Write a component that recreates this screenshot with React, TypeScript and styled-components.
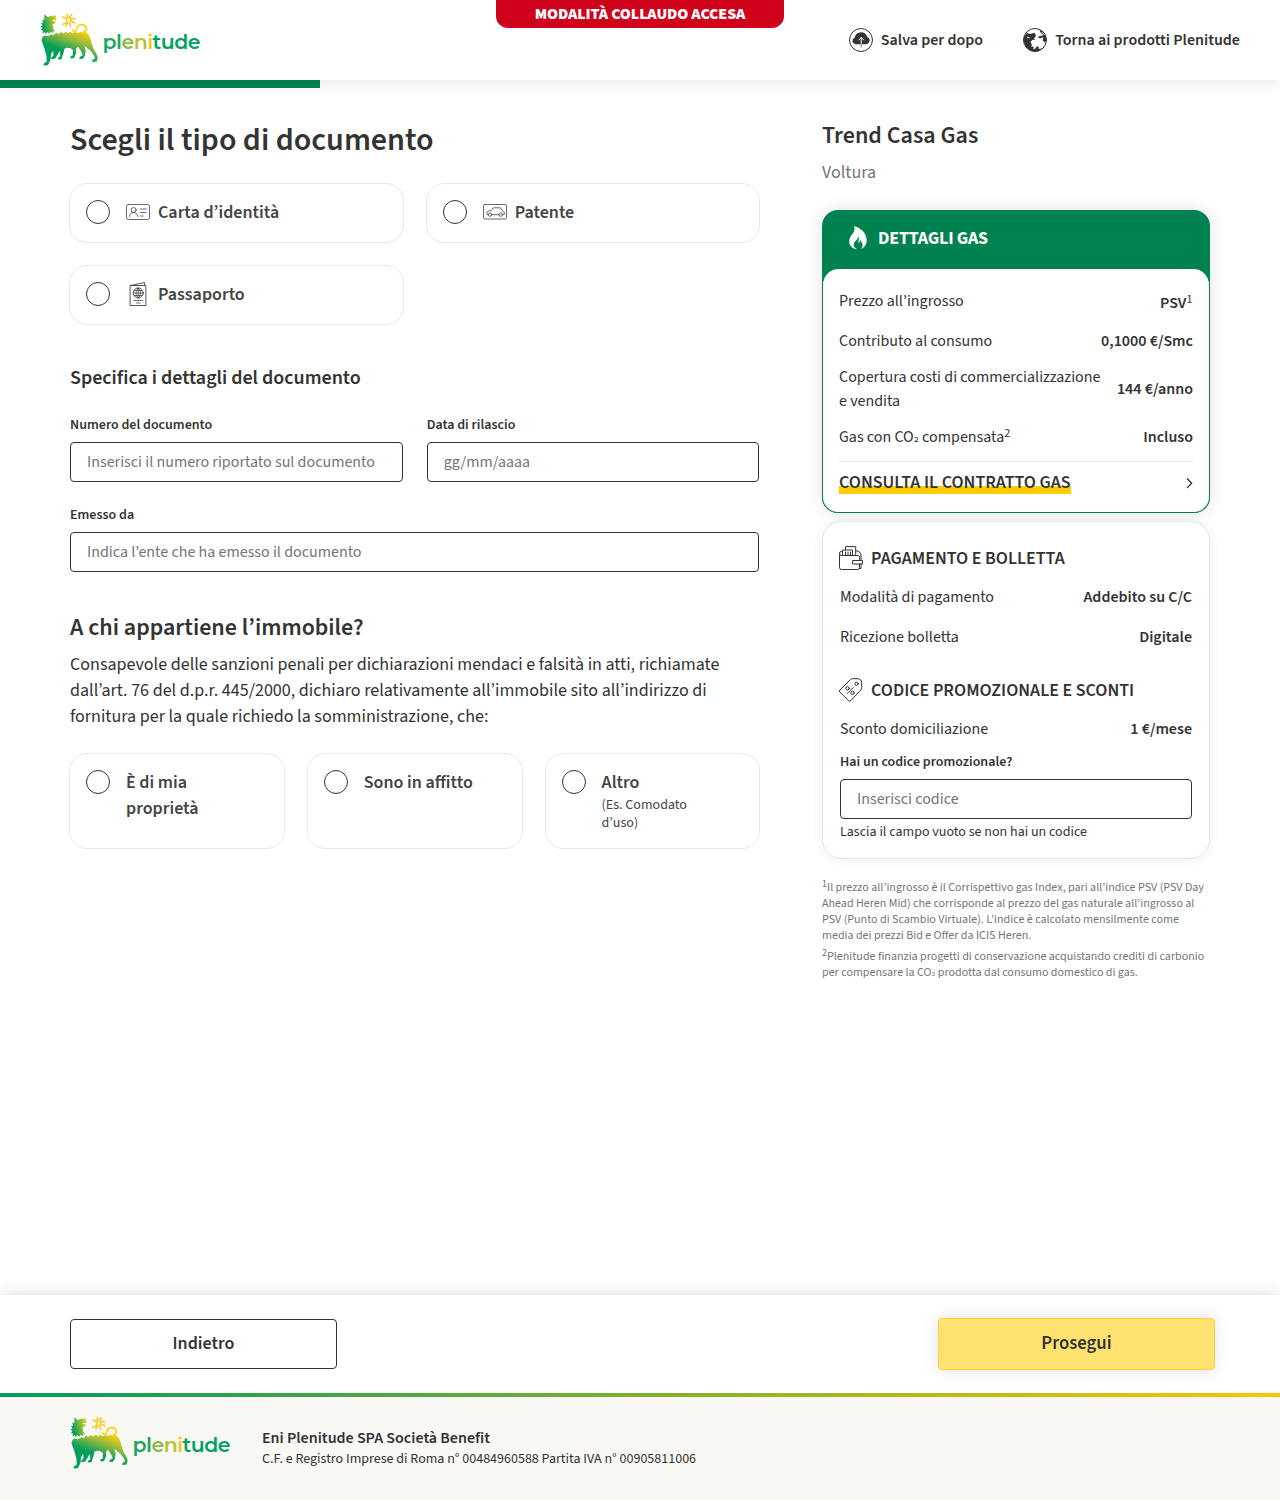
import React from 'react';
import styled, { createGlobalStyle } from 'styled-components';

const Global = createGlobalStyle`
  *, *::before, *::after { box-sizing: border-box; }
  body {
    margin: 0;
    color: #333;
    background: #fff;
    font-family: "Source Sans 3", "Source Sans Pro", "Noto Sans", sans-serif;
    font-size: 16px;
    line-height: 24px;
  }
  h1, h2, h3, p { margin: 0; }
  sup { font-size: 75%; font-weight: 400; line-height: 0; position: relative; top: -0.45em; vertical-align: baseline; }
`;

const Page = styled.div`
  display: flex;
  flex-direction: column;
  height: 1500px;
`;

const Header = styled.header`
  position: relative;
  display: flex;
  align-items: center;
  justify-content: space-between;
  height: 80px;
  padding: 0 40px;
  background: #fff;
  box-shadow: 0 0 16px rgba(0, 0, 0, 0.12);
`;

const Banner = styled.div`
  position: absolute;
  top: 0;
  left: 496px;
  width: 288px;
  height: 28px;
  border-radius: 0 0 12px 12px;
  background: #d0021b;
  color: #fff;
  font-size: 16px;
  font-weight: 900;
  letter-spacing: -0.1px;
  line-height: 28px;
  text-align: center;
`;

const HeaderLinks = styled.nav`
  display: flex;
  gap: 40px;
`;

const HeaderLink = styled.a`
  display: flex;
  align-items: center;
  gap: 8px;
  font-weight: 600;
`;

const Progress = styled.div`
  position: relative;
  flex: none;
  width: 25%;
  height: 8px;
  background: #008250;
`;

const Main = styled.main`
  display: flex;
  flex: 1;
  justify-content: space-between;
  padding: 0 70px 0 69px;
`;

const FormColumn = styled.section`
  width: 691.4px;
  padding-top: 32px;
`;

const Title = styled.h1`
  padding-left: 1px;
  font-size: 32px;
  font-weight: 600;
  line-height: 40px;
`;

const SubTitle = styled.h2<{ $size: number; $top: number }>`
  padding: ${(p) => p.$top}px 0 0 1px;
  font-size: ${(p) => p.$size}px;
  font-weight: 600;
  line-height: 28px;
`;

const OptionGrid = styled.div<{ $cols: number }>`
  display: grid;
  grid-template-columns: repeat(${(p) => p.$cols}, 1fr);
  gap: 22px;
  margin-top: 23px;
`;

const Option = styled.label<{ $tall?: boolean }>`
  display: flex;
  align-items: flex-start;
  height: ${(p) => (p.$tall ? 96 : 60)}px;
  padding: 16px 48px 0 16px;
  border: 1px solid #e8e8e8;
  border-radius: 18px;
  color: #444;
  font-size: 18px;
  font-weight: 600;
  line-height: 26px;

  svg { margin-right: 8px; }
`;

const Radio = styled.span`
  flex: none;
  width: 24px;
  height: 24px;
  margin-right: 16px;
  border: 1px solid #333;
  border-radius: 50%;
`;

const OptionHint = styled.small`
  display: block;
  font-size: 14px;
  font-weight: 400;
  line-height: 18px;
`;

const Fields = styled.div`
  display: grid;
  grid-template-columns: 1fr 1fr;
  gap: 21px 24px;
  margin: 21px 1px 0;
`;

const Field = styled.label<{ $wide?: boolean }>`
  grid-column: ${(p) => (p.$wide ? '1 / -1' : 'auto')};
  display: flex;
  flex-direction: column;
  gap: 4px;
  font-size: 14px;
  font-weight: 600;
  line-height: 25px;
`;

const Input = styled.input`
  width: 100%;
  height: 40px;
  padding: 0 16px;
  border: 1px solid #333;
  border-radius: 4px;
  background: #fff;
  font: 400 16px/24px "Source Sans 3", "Source Sans Pro", "Noto Sans", sans-serif;

  &::placeholder { color: #757575; opacity: 1; }
`;

const Statement = styled.p`
  padding: 10px 20px 0 1px;
  font-size: 18px;
  line-height: 26px;
`;

const Sidebar = styled.aside`
  width: 388px;
  padding-top: 34px;
`;

const OfferName = styled.h2`
  font-size: 24px;
  font-weight: 600;
  line-height: 28px;
`;

const OfferKind = styled.p`
  margin-top: 10px;
  color: #757575;
  font-size: 18px;
  line-height: 26px;
`;

const GasCard = styled.div`
  height: 303px;
  margin-top: 24px;
  border-radius: 16px;
  background: #008250;
  box-shadow: 0 0 16px rgba(0, 0, 0, 0.12);
`;

const GasHead = styled.div`
  display: flex;
  align-items: center;
  height: 59px;
  padding: 0 24px 1px;
  gap: 8px;
  color: #fff;
  font-size: 18px;
  font-weight: 700;
  letter-spacing: -0.2px;

  svg { margin-bottom: 2px; }
`;

const GasBody = styled.div`
  height: 244px;
  padding: 12px 16px 0;
  border: 1px solid #008250;
  border-top: 0;
  border-radius: 16px;
  background: #fff;
`;

const Row = styled.div<{ $inset?: boolean }>`
  display: flex;
  align-items: center;
  justify-content: space-between;
  min-height: 40px;
  padding: 0 ${(p) => (p.$inset ? 1 : 0)}px;
  gap: 16px;
`;

const TallRow = styled(Row)`
  min-height: 56px;
`;

const Value = styled.strong<{ $noted?: boolean }>`
  flex: none;
  padding: ${(p) => (p.$noted ? '4px 0.6px 0 0' : '0')};
  font-weight: 600;
`;

const Subscript = styled.span`
  position: relative;
  top: -0.15em;
  font-size: 0.88em;
  line-height: 0;
`;

const ContractLink = styled.a`
  display: flex;
  align-items: center;
  justify-content: space-between;
  height: 42px;
  margin-top: 4px;
  border-top: 1px solid #e8e8e8;
  font-size: 18px;
  font-weight: 600;
  line-height: 23px;

  span { background: linear-gradient(transparent 15px, #ffcd00 15px); }
`;

const BillCard = styled.div`
  height: 338px;
  margin-top: 8px;
  padding: 20px 16px 0;
  border: 1px solid #e8e8e8;
  border-radius: 20px;
  background: #fff;
  box-shadow: 0 0 12px rgba(0, 0, 0, 0.07);
`;

const CardHeading = styled.h3<{ $top?: number }>`
  display: flex;
  align-items: center;
  height: 34px;
  margin: ${(p) => p.$top ?? 0}px 0 1px;
  gap: 8px;
  font-size: 18px;
  font-weight: 600;

  svg { margin-bottom: 2px; }
`;

const PromoField = styled(Field)`
  padding: 1px 1px 0;
`;

const PromoHelp = styled.p`
  padding: 1px 1px 0;
  font-size: 14px;
  line-height: 25px;
`;

const Notes = styled.div`
  margin-top: 21px;
  color: #757575;
  font-size: 12px;
  line-height: 16px;

  p + p { margin-top: 5px; }
  sup { font-size: 10px; }
`;

const ActionBar = styled.div`
  display: flex;
  flex: none;
  align-items: center;
  justify-content: space-between;
  height: 98px;
  padding: 0 65px 0 70px;
  background: #fff;
  box-shadow: 0 0 16px rgba(0, 0, 0, 0.15);
`;

const Button = styled.button<{ $primary?: boolean }>`
  width: ${(p) => (p.$primary ? 277 : 267)}px;
  height: ${(p) => (p.$primary ? 52 : 50)}px;
  padding: 0 0 ${(p) => (p.$primary ? 2 : 0)}px;
  border: 1px solid ${(p) => (p.$primary ? '#ffd333' : '#333')};
  border-radius: 4px;
  background: ${(p) => (p.$primary ? '#ffe270' : '#fff')};
  box-shadow: ${(p) => (p.$primary ? '0 0 16px rgba(0, 0, 0, 0.12)' : 'none')};
  color: #333;
  font-family: "Source Sans 3", "Source Sans Pro", "Noto Sans", sans-serif;
  font-size: ${(p) => (p.$primary ? 18.72 : 18)}px;
  font-weight: 600;
  line-height: 24px;
`;

const Footer = styled.footer`
  display: flex;
  flex: none;
  height: 107px;
  padding: 18px 70px 0;
  gap: 30px;
  border-top: 4px solid;
  border-image: linear-gradient(90deg, #009b5e, #fdc500) 1;
  background: #f9f8f5;
`;

const Legal = styled.div`
  padding-top: 12px;
  font-size: 14px;
  line-height: 20px;

  strong { display: block; font-size: 16px; font-weight: 600; line-height: 22px; }
`;

const Svg = styled.svg`
  display: block;
  flex: none;
  fill: none;
  stroke: currentColor;
  stroke-linejoin: round;
  stroke-linecap: round;
`;

const Wordmark = styled.text`
  font-family: Montserrat, Lato, sans-serif;
  font-size: 20.5px;
  font-weight: 600;
  stroke: none;
`;

function Logo({ id }: { id: string }) {
  return (
    <Svg width="162" height="56" viewBox="0 0 162 56">
      <defs>
        <linearGradient id={`${id}b`} gradientUnits="userSpaceOnUse" x1="38" y1="17" x2="29" y2="41">
          <stop offset="0" stopColor="#ffd500" />
          <stop offset="0.45" stopColor="#9dbb3c" />
          <stop offset="1" stopColor="#009f5a" />
        </linearGradient>
        <linearGradient id={`${id}h`} gradientUnits="userSpaceOnUse" x1="3" y1="14" x2="17" y2="10">
          <stop offset="0" stopColor="#009f5a" />
          <stop offset="1" stopColor="#d8cf25" />
        </linearGradient>
      </defs>
      <g stroke="none" transform="translate(-.3 -.3)">
        <path fill={`url(#${id}h)`} d="M4.600 2.600 7.800 5.200 12 4 16.600 3.800 16 5.700 17.300 6.800 15.800 8.400 12.800 8.200 13.400 9.500 16.400 9.600 14.500 12 12.800 12.800 13.600 17 15.600 20 13.200 19.600 13.500 21.300 10.800 20.200 9.700 22 7.800 20.300 5.600 22.800 5.500 20.300 2.700 21.800 3.400 19 1.200 18 2.800 16.600 .7 14.500 2.900 13.900 1.200 11 3.400 11.500 2.600 7.800 4.700 8.200Z" />
        <path fill={`url(#${id}b)`} d="M4.300 23.800 8.500 24.300 12 22.500 14 23.400 16.500 20.800 18.500 22.200 21.500 20.300 23.500 21.800 26 20 28.300 21.500 30.600 20 33 21.500 35.400 20 38 21.300 41 20 45 20.300C49 21.400 50.200 25 51.200 29L54 37.500C55.200 39.300 57.800 43.600 58 45.700L57 49.800 52.300 50.200 53.200 47.700 55.400 46.900C54.600 43.300 52 39.800 48.600 37.300L44.700 34 46 39 45.200 44.400 42.800 47.200 39.500 47 40.200 45 42.800 44C43 40.700 40.200 38.300 38.400 35.100L36.400 37 36.500 41 34.300 46.500 30.300 46.500 31.200 44.500 33 43.700 33.300 38.500 31 36.600 27 36 24.700 37 24 40.500 21.700 47.500 18 47.700 18.700 45.700 20.500 44.500 20.200 39 18.200 42.500 15.300 47 11.200 47.400 12 45.200 13.800 44 13.500 39 11.600 42 10.600 48.500 8.200 53.500 3.700 53.800 4.400 51.600 7 50 6.800 44.500 4.700 36.500 1.800 28.500 2.600 25.500Z" />
      </g>
      <path stroke="#f7ca1c" strokeWidth="1.500" d="M25.300 6.300q2.500 1.200 1.200 3.700-.3 1.500-1.300 1.600M25.300 6.300l-2.600-1.500M27 5.800l.6-3.600M29.500 5.300l2-2.600M31 6.800l4-.4M31 9l3.800 2M29.500 10.800l1.300 3.600M27.300 11.300l-1.400 3M25.200 11.600l-2.500.8M28.300 5.200q3 .8 2.700 3.500-.8 2-3 2.400" />
      <path stroke="#ffd21a" strokeWidth="1.700" d="M32.600 18C33.700 20.600 36 19.800 36.600 17.200S39 12.500 42 12.600C46.500 13 47.800 17 45 19.300L42 21.300" />
      <Wordmark x="62.500" y="37" textLength="98">
        <tspan fill="#1ba55e">pl</tspan>
        <tspan fill="#8dba4c">e</tspan>
        <tspan fill="#b5c233">n</tspan>
        <tspan fill="#f0cb10">i</tspan>
        <tspan fill="#00a162">tude</tspan>
      </Wordmark>
    </Svg>
  );
}

const CloudIcon = () => (
  <Svg width="24" height="24" viewBox="0 0 24 24">
    <circle cx="12" cy="12" r="11.500" />
    <path fill="currentColor" stroke="none" d="M6.400 16.200a3.300 3.300 0 0 1-.7-6.400A6.200 6.200 0 0 1 12 4.200c3.200 0 5.600 2 6.300 4.900a3.700 3.700 0 0 1-.9 7.100Z" />
    <path stroke="#fff" d="M12.200 16V9.600M9.800 12l2.400-2.500 2.400 2.500" />
    <path stroke="#777" d="M12.200 16.600V19" />
  </Svg>
);

const GlobeIcon = () => (
  <Svg width="24" height="24" viewBox="0 0 24 24">
    <circle cx="12" cy="12" r="11.500" />
    <g fill="currentColor" stroke="none">
      <path d="M1 8.500 4 5 7 6 11.500 4.800 13 7.500 11 10.500 12.300 11.500 9.200 12 7.500 14 9 17 8 18.500 11 19 10 21.200 12.500 20.500 14 18 16 19.500 15.500 21 19 20.500 16 23 12 23.700 7 22.500 2.500 18.500 .5 13Z" />
      <path d="M16 1.500 18 5 20.500 7.300 16 8.300 15 9.800 17.500 10.300 20.300 9.300 19.700 12.500 22 14.500 23.600 12 22.500 6.500 19.500 3Z" />
    </g>
    <path stroke="#fff" d="m4.500 9.300 1.700.4M19.300 4.500l2 2" />
  </Svg>
);

const IdIcon = () => (
  <Svg width="24" height="24" viewBox="0 0 24 24" strokeWidth="0.800">
    <rect x=".5" y="4.500" width="23" height="15" rx="2" />
    <circle cx="7.600" cy="10" r="2.500" />
    <path d="M3.400 16.500c.3-2.500 1.800-4 4.200-4s4 1.500 4.300 4M14.500 9h5.500M14.500 12.500h5.500M14.500 16h2.600" />
  </Svg>
);

const LicenseIcon = () => (
  <Svg width="24" height="24" viewBox="0 0 24 24" strokeWidth="0.800">
    <rect x=".5" y="4.500" width="23" height="14.500" rx="1.500" />
    <path d="M5.200 14.600H4.100l-.4-2.300 1.400-1.200 3.200-.6 2-2.700h7.200l2.300 3.300 1.500 1.100v2.200l-1.200.4M8.700 14.700h7.200" />
    <circle cx="7" cy="14.600" r="1.700" />
    <circle cx="17.700" cy="14.600" r="1.700" />
  </Svg>
);

const PassportIcon = () => (
  <Svg width="24" height="24" viewBox="0 0 24 24" strokeWidth="0.900">
    <path d="M4.500 3.500h15.400v20H4.500ZM4.500 3.500 18.500.6v2.900" />
    <circle cx="12.200" cy="11" r="5" />
    <path strokeWidth=".8" d="M7.200 11h10M12.200 6v10M8.500 8.500h7.400M8.500 13.500h7.400M12.200 6c-3 3-3 7 0 10 3-3 3-7 0-10M8 18.500h8.500M10.500 21h3.500" />
  </Svg>
);

const FlameIcon = () => (
  <Svg width="24" height="24" viewBox="0 0 24 24">
    <path fill="#fff" stroke="none" d="M8 .2C14 1.300 20.700 6.500 20.700 14.200c0 4.400-2.500 7.600-5.800 8.700 1.500-1.500 2.200-3.200 1.400-5.200-.5-1.300-1.400-2-1.300-3.500-1.300.6-1.900 1.700-1.900 3.200-.8-.6-.9-1.900-.4-3.600.4-1.500.2-2.400-.3-3.100-.5 2.700-3.600 4.300-4.500 6.700-.8 2.300.4 4.200 3.300 5.800C6.500 23 3.200 19.500 3.200 15.200c0-6.700 7.600-8.500 4.800-15Z" />
  </Svg>
);

const WalletIcon = () => (
  <Svg width="24" height="24" viewBox="0 0 24 24">
    <path d="M20.500 18v3.500a2 2 0 0 1-2 2h-16a2 2 0 0 1-2-2V7.500a2 2 0 0 0 2 2h16.200a2 2 0 0 1 2 2v3M.5 7.500a2 2 0 0 1 2-2.300M3.500 9V4h10v5M6.500 3.800V.6h10.200V9M6.500 6v3M9 6v3M11.500 6v3M17 5h2.500l2.500 3v6.500M22 18v4.500h-1.800" />
    <path d="M14 14.500h9.500V18H14Z" />
  </Svg>
);

const TagIcon = () => (
  <Svg width="24" height="24" viewBox="0 0 24 24">
    <path d="m.8 12.200 10.500-10.500q1-1 2.300-1h5.600q3 .6 3.500 3.300v5.500q0 1.500-1 2.500L12 22.500q-1.300 1.200-2.600 0l-8.600-8.400q-1-1 0-1.900ZM8.200 15.500l6-6" />
    <circle cx="8.500" cy="10.300" r="1.700" />
    <circle cx="13.500" cy="14.900" r="1.700" />
    <circle cx="17.500" cy="5.800" r="1.600" />
  </Svg>
);

const Chevron = () => (
  <Svg width="8" height="12" viewBox="0 0 8 12" strokeWidth="1.300">
    <path d="m2.300 1.800 4.400 4.400-4.400 4.400" />
  </Svg>
);

export default function App() {
  return (
    <Page>
      <Global />
      <Header>
        <Logo id="top" />
        <Banner>MODALITÀ COLLAUDO ACCESA</Banner>
        <HeaderLinks>
          <HeaderLink><CloudIcon />Salva per dopo</HeaderLink>
          <HeaderLink><GlobeIcon />Torna ai prodotti Plenitude</HeaderLink>
        </HeaderLinks>
      </Header>
      <Progress />
      <Main>
        <FormColumn>
          <Title>Scegli il tipo di documento</Title>
          <OptionGrid $cols={2}>
            <Option><Radio /><IdIcon />Carta d’identità</Option>
            <Option><Radio /><LicenseIcon />Patente</Option>
            <Option><Radio /><PassportIcon />Passaporto</Option>
          </OptionGrid>
          <SubTitle $size={20} $top={39}>Specifica i dettagli del documento</SubTitle>
          <Fields>
            <Field>Numero del documento<Input placeholder="Inserisci il numero riportato sul documento" /></Field>
            <Field>Data di rilascio<Input placeholder="gg/mm/aaaa" /></Field>
            <Field $wide>Emesso da<Input placeholder="Indica l’ente che ha emesso il documento" /></Field>
          </Fields>
          <SubTitle $size={24} $top={42}>A chi appartiene l’immobile?</SubTitle>
          <Statement>
            Consapevole delle sanzioni penali per dichiarazioni mendaci e falsità in atti, richiamate dall’art. 76 del
            d.p.r. 445/2000, dichiaro relativamente all’immobile sito all’indirizzo di fornitura per la quale richiedo
            la somministrazione, che:
          </Statement>
          <OptionGrid $cols={3}>
            <Option $tall><Radio /><div>È di mia proprietà</div></Option>
            <Option $tall><Radio /><div>Sono in affitto</div></Option>
            <Option $tall><Radio /><div>Altro<OptionHint>(Es. Comodato d’uso)</OptionHint></div></Option>
          </OptionGrid>
        </FormColumn>
        <Sidebar>
          <OfferName>Trend Casa Gas</OfferName>
          <OfferKind>Voltura</OfferKind>
          <GasCard>
            <GasHead><FlameIcon />DETTAGLI GAS</GasHead>
            <GasBody>
              <Row><span>Prezzo all’ingrosso</span><Value $noted>PSV<sup>1</sup></Value></Row>
              <Row><span>Contributo al consumo</span><Value>0,1000 €/Smc</Value></Row>
              <TallRow><span>Copertura costi di commercializzazione e vendita</span><Value>144 €/anno</Value></TallRow>
              <Row><span>Gas con CO<Subscript>₂</Subscript> compensata<sup>2</sup></span><Value>Incluso</Value></Row>
              <ContractLink><span>CONSULTA IL CONTRATTO GAS</span><Chevron /></ContractLink>
            </GasBody>
          </GasCard>
          <BillCard>
            <CardHeading><WalletIcon />PAGAMENTO E BOLLETTA</CardHeading>
            <Row $inset><span>Modalità di pagamento</span><Value>Addebito su C/C</Value></Row>
            <Row $inset><span>Ricezione bolletta</span><Value>Digitale</Value></Row>
            <CardHeading $top={17}><TagIcon />CODICE PROMOZIONALE E SCONTI</CardHeading>
            <Row $inset><span>Sconto domiciliazione</span><Value>1 €/mese</Value></Row>
            <PromoField>Hai un codice promozionale?<Input placeholder="Inserisci codice" /></PromoField>
            <PromoHelp>Lascia il campo vuoto se non hai un codice</PromoHelp>
          </BillCard>
          <Notes>
            <p><sup>1</sup>Il prezzo all’ingrosso è il Corrispettivo gas Index, pari all’indice PSV (PSV Day Ahead Heren Mid) che corrisponde al prezzo del gas naturale all’ingrosso al PSV (Punto di Scambio Virtuale). L’indice è calcolato mensilmente come media dei prezzi Bid e Offer da ICIS Heren.</p>
            <p><sup>2</sup>Plenitude finanzia progetti di conservazione acquistando crediti di carbonio per compensare la CO<Subscript>₂</Subscript> prodotta dal consumo domestico di gas.</p>
          </Notes>
        </Sidebar>
      </Main>
      <ActionBar>
        <Button>Indietro</Button>
        <Button $primary>Prosegui</Button>
      </ActionBar>
      <Footer>
        <Logo id="bottom" />
        <Legal>
          <strong>Eni Plenitude SPA Società Benefit</strong>
          C.F. e Registro Imprese di Roma n° 00484960588 Partita IVA n° 00905811006
        </Legal>
      </Footer>
    </Page>
  );
}
